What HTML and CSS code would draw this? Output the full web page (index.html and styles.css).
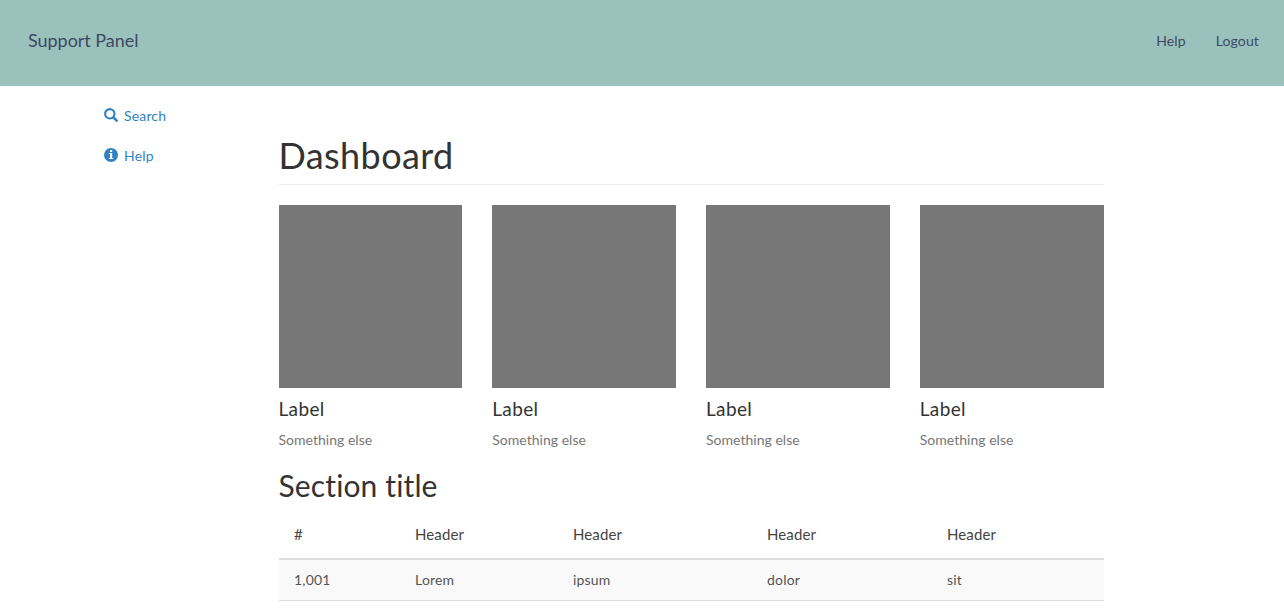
FILE: index.html
```html
<!DOCTYPE html>
<html lang="en">
<head>
<meta charset="utf-8">
<title>Support Panel</title>
<link rel="stylesheet" href="styles.css">
</head>
<body>
<header class="navbar">
  <a class="brand">Support Panel</a>
  <nav class="nav-links"><a>Help</a><a>Logout</a></nav>
</header>
<div class="layout">
  <aside class="sidebar">
    <a class="side-link"><svg class="icon" viewBox="0 0 14 14"><circle cx="5.800" cy="5.800" r="4.700" fill="none" stroke="currentColor" stroke-width="2.100"/><path d="M9.300 9.300l3.400 3.400" stroke="currentColor" stroke-width="2.500" stroke-linecap="round"/></svg>Search</a>
    <a class="side-link"><svg class="icon" viewBox="0 0 14 14"><path fill="currentColor" fill-rule="evenodd" d="M7 0a7 7 0 1 1 0 14A7 7 0 0 1 7 0zM6 2v2h2.200V2zM5 5v1h1v4H5v1h4.200v-1h-1V5z"/></svg>Help</a>
  </aside>
  <main class="main">
    <h1 class="page-title">Dashboard</h1>
    <section class="tiles">
      <div class="tile"><div class="thumb"></div><h4 class="label">Label</h4><span class="muted">Something else</span></div>
      <div class="tile"><div class="thumb"></div><h4 class="label">Label</h4><span class="muted">Something else</span></div>
      <div class="tile"><div class="thumb"></div><h4 class="label">Label</h4><span class="muted">Something else</span></div>
      <div class="tile"><div class="thumb"></div><h4 class="label">Label</h4><span class="muted">Something else</span></div>
    </section>
    <h2 class="section-title">Section title</h2>
    <table class="table">
      <colgroup><col class="c1"><col class="c2"><col class="c3"><col class="c4"><col></colgroup>
      <thead><tr><th>#</th><th>Header</th><th>Header</th><th>Header</th><th>Header</th></tr></thead>
      <tbody><tr><td>1,001</td><td>Lorem</td><td>ipsum</td><td>dolor</td><td>sit</td></tr></tbody>
    </table>
  </main>
</div>
</body>
</html>
```
FILE: styles.css
```css
* { box-sizing: border-box; }
html { overflow: hidden; }
body {
  margin: 0;
  background: #fff;
  color: #333;
  font: 14px/20px Lato, sans-serif;
  font-variant-ligatures: none;
}
.navbar {
  display: flex;
  justify-content: space-between;
  align-items: flex-start;
  height: 86px;
  padding: 30px 25px 0 28px;
  background: #9bc1bc;
  color: #3b4a62;
}
.brand { font-size: 18px; letter-spacing: -.04px; }
.nav-links { display: flex; gap: 30px; padding-top: 1px; letter-spacing: .13px; }
.layout {
  display: flex;
  padding-left: 103.5px;
}
.sidebar {
  width: 175px;
  padding-top: 20px;
}
.side-link {
  display: flex;
  align-items: flex-start;
  height: 20px;
  margin-bottom: 20px;
  color: #3182c4;
  letter-spacing: .16px;
}
.icon {
  width: 14px;
  height: 14px;
  margin: 2px 6px 0 .5px;
}
.main { width: 825px; padding-top: 50px; }
h1, h2, h4 { font-weight: 400; }
.page-title {
  height: 49px;
  margin: 0 0 20px;
  border-bottom: 1px solid #eee;
  font-size: 36px;
  line-height: 38px;
  letter-spacing: .4px;
}
.tiles {
  display: grid;
  grid-template-columns: repeat(4, 1fr);
  gap: 30px;
}
.thumb { height: 183px; background: #777; }
.label { margin: 11px 0; font-size: 19px; line-height: 20px; letter-spacing: .35px; }
.muted { display: block; color: #777; letter-spacing: .02px; }
.section-title {
  margin: 19px 0 11px;
  font-size: 30px;
  line-height: 33px;
  letter-spacing: .13px;
}
.table {
  width: 100%;
  border-collapse: separate;
  border-spacing: 0;
  table-layout: fixed;
}
.c1 { width: 121px; }
.c2 { width: 158px; }
.c3 { width: 194px; }
.c4 { width: 180px; }
.table th {
  height: 47px;
  padding: 0 15px 4px 15.5px;
  border-bottom: 2px solid #ddd;
  color: #444;
  font-size: 15px;
  font-weight: 400;
  text-align: left;
  letter-spacing: .1px;
}
.table td {
  height: 41px;
  padding: 0 15px 0 15.5px;
  border-bottom: 1px solid #ddd;
  background: #f9f9f9;
  color: #555;
  letter-spacing: .2px;
}
```
